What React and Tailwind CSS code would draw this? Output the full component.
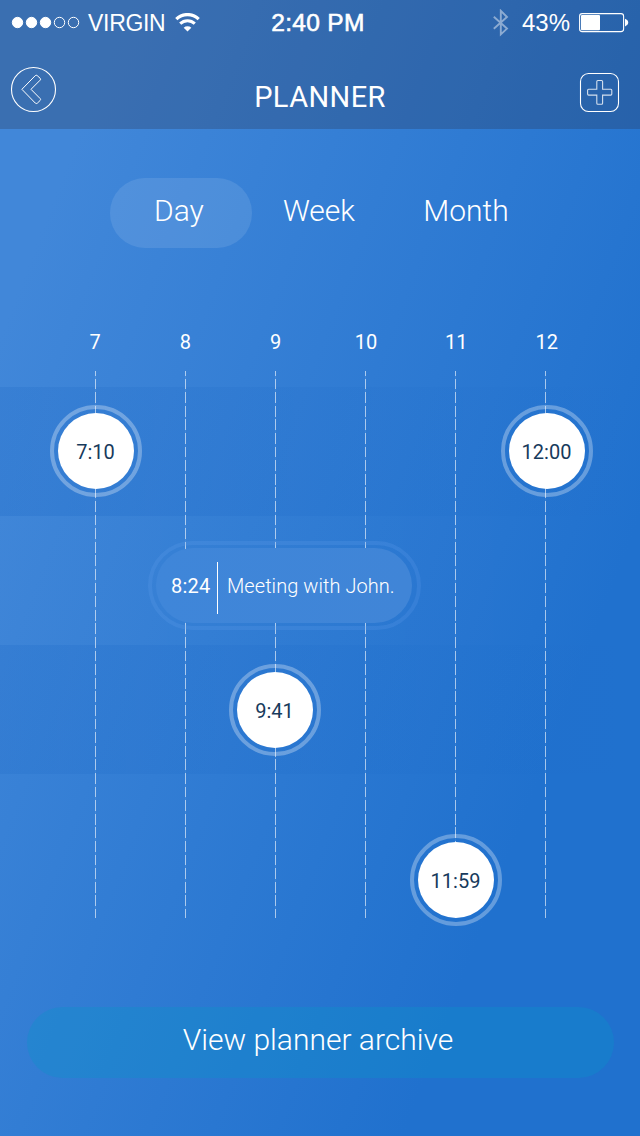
import React from 'react';

const HOURS = ['7', '8', '9', '10', '11', '12'];

function StatusBar() {
  return (
    <div className="flex h-[46px] items-center font-['Liberation_Sans',sans-serif] leading-none text-white">
      <div className="flex w-[240px] items-center pl-[11px]">
        <svg width="70" height="14" viewBox="0 0 70 14" stroke="white" strokeWidth="1">
          <circle cx="6.5" cy="6.5" r="5.2" fill="white" />
          <circle cx="20.5" cy="6.5" r="5.2" fill="white" />
          <circle cx="34.5" cy="6.5" r="5.2" fill="white" />
          <circle cx="48.5" cy="6.5" r="5.2" fill="none" />
          <circle cx="62.5" cy="6.5" r="5.2" fill="none" />
        </svg>
        <span className="ml-[7px] w-[77px] whitespace-nowrap pt-px text-[23px] tracking-[-0.3px]">VIRGIN</span>
        <svg className="ml-[10px]" width="26" height="20" viewBox="0 0 26 20" fill="none" stroke="white">
          <path d="M1.3 6.1 A16 16 0 0 1 23.7 6.1" strokeWidth="3.2" />
          <path d="M5.2 10.7 A10.5 10.5 0 0 1 19.8 10.7" strokeWidth="3" />
          <path d="M12.5 18.6 L8.7 14.7 A5.6 5.6 0 0 1 16.3 14.7 Z" fill="white" stroke="none" />
        </svg>
      </div>
      <span className="w-[156px] whitespace-nowrap text-center text-[24.5px] tracking-[0.3px] [-webkit-text-stroke:0.6px_white]">2:40 PM</span>
      <div className="flex flex-1 items-center pl-[97px]">
        <svg width="16" height="28" viewBox="0 0 16 28" fill="none" stroke="white" strokeWidth="1.9" opacity="0.45">
          <path d="M0.8 7.8 L14 19.6 L7.8 25.4 V1.8 L14 8 L0.8 19.8" />
        </svg>
        <span className="ml-[13px] w-[49px] whitespace-nowrap text-[24px]">43%</span>
        <svg className="ml-[8px]" width="50" height="20" viewBox="0 0 50 20">
          <rect x="0.6" y="0.6" width="44" height="18" rx="2.6" fill="none" stroke="white" strokeWidth="1.1" />
          <rect x="2" y="2" width="19" height="15.2" rx="1" fill="white" />
          <path d="M46 5.8 Q49.2 7 49.2 9.6 Q49.2 12.2 46 13.4 Z" fill="white" />
        </svg>
      </div>
    </div>
  );
}

function Header() {
  return (
    <header className="h-[129px] bg-[rgba(41,40,60,0.25)]">
      <StatusBar />
      <div className="flex h-[83px] items-start justify-between pl-[10px] pr-[20px]">
        <button className="mt-5 w-[60px]" aria-label="Back">
          <svg width="47" height="47" viewBox="0 0 47 47" fill="none" stroke="white" strokeLinejoin="round">
            <circle cx="23.5" cy="23.5" r="22" strokeWidth="1.1" />
            <path d="M11.9 23.3 L25.3 9.6 Q26.2 8.8 27.2 9.6 L30.2 12.3 Q31 13.2 30.2 14.1 L21 23.3 L30.2 32.6 Q31 33.5 30.2 34.4 L27.3 37.2 Q26.2 38 25.3 37.1 Z" strokeWidth="1" />
          </svg>
        </button>
        <h1 className="mt-[33px] text-[29px] leading-[36px] font-normal tracking-[0.4px]">PLANNER</h1>
        <button className="mt-[26px] flex w-[50px] justify-end" aria-label="Add">
          <svg width="41" height="41" viewBox="0 0 41 41" fill="none" stroke="white">
            <rect x="1.5" y="1.5" width="38" height="38" rx="8" strokeWidth="1.1" />
            <path d="M18.8 8.5 h3.8 q1 0 1 1 v7.8 h8.2 q1 0 1 1 v3.8 q0 1 -1 1 h-8.2 v8.2 q0 1 -1 1 h-3.8 q-1 0 -1 -1 v-8.2 h-8.2 q-1 0 -1 -1 v-3.8 q0 -1 1 -1 h8.2 v-7.8 q0 -1 1 -1 Z" strokeWidth="1.1" opacity="0.8" />
          </svg>
        </button>
      </div>
    </header>
  );
}

function Tabs() {
  return (
    <nav className="mt-[49px] flex h-[70px] pl-[110px] text-[30px] leading-[66px] font-light">
      <button className="w-[142px] rounded-full bg-white/10 pr-[4px] pb-[4px]">Day</button>
      <button className="w-[134px] pb-[4px]">Week</button>
      <button className="w-[160px] pb-[4px]">Month</button>
    </nav>
  );
}

function TimeDot({ className, children }) {
  return (
    <div className={`absolute size-[92px] rounded-full border-4 border-white/30 p-1 ${className}`}>
      <div className="flex size-[76px] items-center justify-center rounded-full bg-white pt-[2px] pr-px text-[20px] text-[#173a5c]">
        <span>{children}</span>
      </div>
    </div>
  );
}

function Timeline() {
  return (
    <section className="relative h-[555px]">
      <div className="absolute inset-x-0 top-4">
        <div className="h-[129px] bg-linear-to-r from-[rgba(0,80,180,0.13)] to-[rgba(0,80,180,0)]" />
        <div className="h-[129px] bg-linear-to-r from-white/1 to-white/0" />
        <div className="h-[129px] bg-linear-to-r from-[rgba(0,80,180,0.11)] to-[rgba(0,80,180,0)]" />
      </div>
      <div className="relative flex h-[547px] gap-[89px] pl-[95px]">
        {HOURS.map((h) => (
          <div
            key={h}
            className="w-px bg-[repeating-linear-gradient(to_bottom,rgba(255,255,255,0.6)_0px,rgba(255,255,255,0.6)_10.8px,rgba(255,255,255,0.08)_10.8px,rgba(255,255,255,0.08)_13.6px)] bg-[position:0_-6px] bg-[size:1px_600px]"
          />
        ))}
      </div>
      <TimeDot className="left-[50px] top-[34px]">7:10</TimeDot>
      <TimeDot className="left-[501px] top-[34px]">12:00</TimeDot>
      <TimeDot className="left-[229px] top-[293px]">9:41</TimeDot>
      <TimeDot className="left-[410px] top-[463px]">11:59</TimeDot>
      <div className="absolute left-[148px] top-[170px] h-[89px] w-[273px] rounded-full border-4 border-[rgba(100,160,235,0.22)] px-1 py-[3px]">
        <div className="flex h-[75px] w-[256px] items-center rounded-full bg-linear-to-r from-[#3f86d9] to-[#4085d7] pl-[15px] text-[20px] whitespace-nowrap">
          <span className="w-[46px] tracking-[0.2px]">8:24</span>
          <span className="mt-1 h-[52px] w-px bg-white" />
          <span className="pl-[9px] font-light tracking-[0.05px]">Meeting with John.</span>
        </div>
      </div>
    </section>
  );
}

export default function App() {
  return (
    <div className="flex h-[1136px] w-[640px] flex-col overflow-hidden bg-[linear-gradient(111deg,#4187d9_12%,#2071ce_78%)] font-['Roboto',sans-serif] text-white">
      <Header />
      <Tabs />
      <div className="mt-[82px] flex h-[41px] pl-[50px] text-[20px] leading-6">
        {HOURS.map((h) => (
          <span key={h} className="w-[90.3px] text-center">{h}</span>
        ))}
      </div>
      <Timeline />
      <button className="mt-[81px] ml-[27px] h-[71px] w-[587px] rounded-full bg-[rgba(10,148,198,0.32)] pr-[5px] pb-[6px] text-[30px] font-light">
        View planner archive
      </button>
    </div>
  );
}
